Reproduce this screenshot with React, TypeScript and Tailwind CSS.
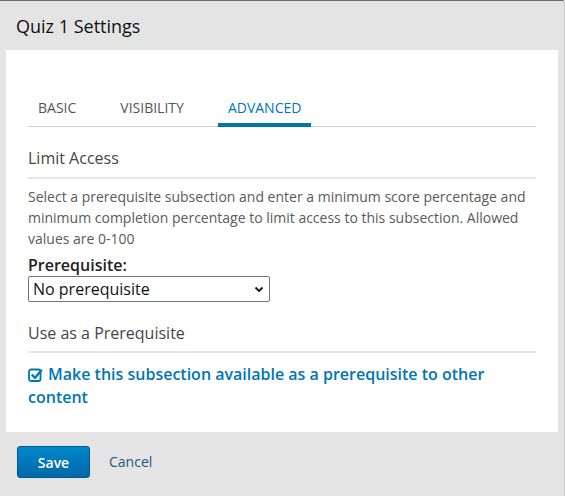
import React from "react";

export default function App() {
  return (
    <div
      className="w-[565px] h-[496px] bg-[#e4e4e4] border-t border-t-[#6b6b6b] border-r border-r-[#c8c8c8] rounded-tr-[3px] flex flex-col"
      style={{ fontFamily: '"Open Sans", "Liberation Sans", sans-serif' }}
    >
      <div className="h-[49px] px-[16px] flex items-center">
        <h1 className="text-[18px] text-[#111] leading-none pt-[0px]">Quiz 1 Settings</h1>
      </div>
      <div className="mx-[6px] w-[552px] h-[382px] bg-white px-[22px] pt-[43px]">
        <div className="flex gap-[24px] border-b border-b-[#cfcfcf] h-[34px]">
          <div className="px-[10px] text-[14px] text-[#555] pt-[4px]">BASIC</div>
          <div className="px-[10px] text-[14px] text-[#555] pt-[4px]">VISIBILITY</div>
          <div className="px-[10px] text-[14px] text-[#0075b4] pt-[4px] border-b-[4px] border-b-[#0075b4] h-[34px]">ADVANCED</div>
        </div>
        <div className="mt-[20px] text-[16px] text-[#454545] leading-[22px]">Limit Access</div>
        <div className="mt-[8px] border-b-2 border-b-[#e5e5e5]" />
        <p className="mt-[7px] text-[14px] text-[#5a5a5a] leading-[21px]">
          Select a prerequisite subsection and enter a minimum score percentage and minimum completion percentage to limit access to this subsection. Allowed values are 0-100
        </p>
        <div className="mt-[5px] text-[16px] font-semibold text-[#222] leading-[22px]">Prerequisite:</div>
        <div className="relative w-[242px] h-[26px] border border-[#767676] rounded-[2px] flex items-center pl-[4px] text-[16px] text-[#111]">
          No prerequisite
          <svg className="absolute right-[5px] top-[9px]" width="10" height="7" viewBox="0 0 10 7">
            <path d="M1.5 1.5 L5 5 L8.5 1.5" fill="none" stroke="#111" strokeWidth="1.8" />
          </svg>
        </div>
        <div className="mt-[20px] text-[16px] text-[#454545] leading-[22px]">Use as a Prerequisite</div>
        <div className="mt-[7px] border-b-2 border-b-[#e5e5e5]" />
        <div className="mt-[10px] text-[16px] font-semibold text-[#0075b4] leading-[23px]">
          <svg className="inline-block mr-[5px] -mt-[3px]" width="15" height="15" viewBox="0 0 15 15">
            <rect x="1" y="2.5" width="11.5" height="11.5" rx="2" fill="none" stroke="#0075b4" strokeWidth="1.8" />
            <path d="M3.8 7.5 L7 10.8 L13.8 3" fill="none" stroke="#0075b4" strokeWidth="2.3" />
          </svg>
          Make this subsection available as a prerequisite to other content
        </div>
      </div>
      <div className="flex items-center px-[17px] pt-[14px] gap-[19px]">
        <button className="w-[73px] h-[32px] rounded-[3px] border border-[#005a8d] bg-gradient-to-b from-[#0088cc] to-[#0068a8] text-white text-[14px] font-semibold">
          Save
        </button>
        <button className="text-[14px] text-[#1e5a82] -mt-[1px]">Cancel</button>
      </div>
    </div>
  );
}
